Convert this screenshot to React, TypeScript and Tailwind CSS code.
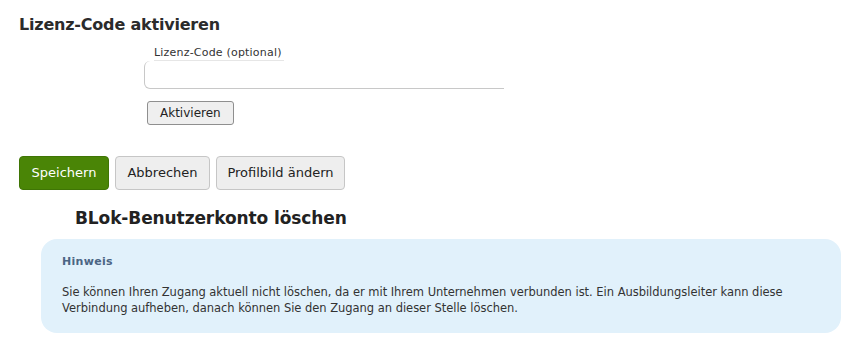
export default function App() {
  const font = { fontFamily: '"DejaVu Sans", Verdana, sans-serif' };
  return (
    <div className="w-[851px] h-[347px] bg-white text-[#333] overflow-hidden" style={font}>
      <div className="pl-[19px] pt-[14px]">
        <h2 className="text-[16px] font-bold leading-[22px] text-[#2b2b2b] tracking-[-0.2px]">
          Lizenz-Code aktivieren
        </h2>
        <div className="ml-[125px] mt-[10px] flex flex-col items-start">
          <label className="ml-[10px] text-[11px] leading-[14px] tracking-[0.2px] text-[#333] border-b border-[#e6e6e6] pr-[2px]">
            Lizenz-Code (optional)
          </label>
          <div className="w-[360px] overflow-hidden">
            <input
              type="text"
              className="block w-[380px] h-[28px] border border-t-0 border-[#c8c8c8] rounded-[6px] bg-white outline-none"
            />
          </div>
          <button className="ml-[3px] mt-[12px] h-[24px] px-[12px] text-[12px] leading-[20px] text-[#222] bg-[#efefef] border border-[#8f8f8f] rounded-[3px]">
            Aktivieren
          </button>
        </div>
        <div className="mt-[31px] flex gap-[6px]">
          <button className="h-[34px] w-[90px] text-[13px] text-white bg-[#4a8506] border border-[#3f7505] rounded-[4px]">
            Speichern
          </button>
          <button className="h-[34px] w-[95px] text-[13px] text-[#222] bg-[#eeeeee] border border-[#c6c6c6] rounded-[4px]">
            Abbrechen
          </button>
          <button className="h-[34px] w-[129px] text-[13px] text-[#222] bg-[#eeeeee] border border-[#c6c6c6] rounded-[4px]">
            Profilbild ändern
          </button>
        </div>
      </div>
      <h2 className="ml-[75px] mt-[17px] text-[17px] font-bold leading-[22px] text-[#222] tracking-[-0.1px]">
        BLok-Benutzerkonto löschen
      </h2>
      <div className="ml-[41px] mt-[10px] w-[800px] h-[94px] bg-[#e1f1fb] rounded-[16px] px-[21px] pt-[16px]">
        <div className="text-[11px] font-bold leading-[14px] tracking-[0.3px] text-[#4b6584]">Hinweis</div>
        <p className="mt-[15px] text-[11.5px] leading-[16px] text-[#333] tracking-[-0.03px]">
          Sie können Ihren Zugang aktuell nicht löschen, da er mit Ihrem Unternehmen verbunden ist. Ein Ausbildungsleiter kann diese
          <br />
          Verbindung aufheben, danach können Sie den Zugang an dieser Stelle löschen.
        </p>
      </div>
    </div>
  );
}
